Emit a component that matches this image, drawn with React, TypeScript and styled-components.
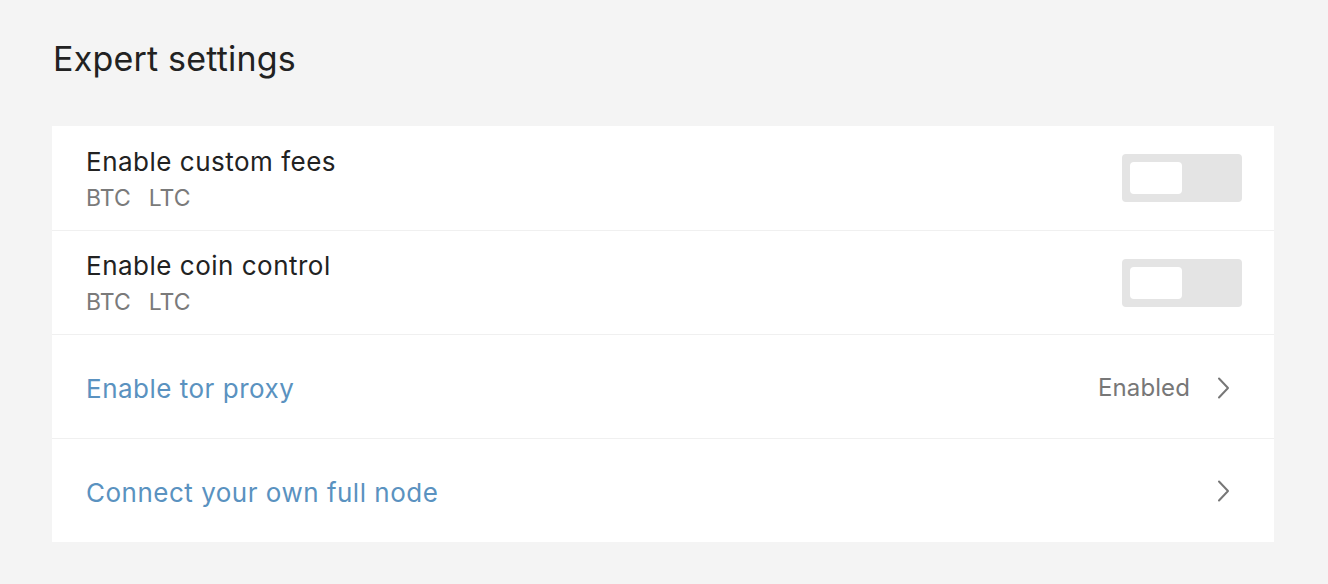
import { useState } from 'react';
import styled, { createGlobalStyle } from 'styled-components';

const GlobalStyle = createGlobalStyle`
  html, body {
    margin: 0;
    padding: 0;
    background: #f4f4f4;
    font-family: Inter, "Noto Sans", "Liberation Sans", sans-serif;
  }
`;

const Page = styled.div`
  padding: 36px 54px 0 52px;
`;

const Title = styled.h1`
  margin: 0 0 44px 1px;
  font-size: 34px;
  line-height: 46px;
  font-weight: 400;
  color: #222;
  letter-spacing: 0.2px;
`;

const Card = styled.div`
  background: #fff;
  display: flex;
  flex-direction: column;
`;

const Row = styled.div<{ $clickable?: boolean }>`
  height: 104px;
  box-sizing: border-box;
  padding: 0 32px 0 34px;
  display: flex;
  align-items: center;
  justify-content: space-between;
  cursor: ${(p) => (p.$clickable ? 'pointer' : 'default')};
  & + & {
    border-top: 1px solid #f0f0f0;
  }
`;

const Texts = styled.div`
  display: flex;
  flex-direction: column;
  gap: 7px;
  margin-top: 2px;
`;

const Label = styled.div<{ $link?: boolean }>`
  font-size: 26px;
  line-height: 30px;
  letter-spacing: 0.5px;
  color: ${(p) => (p.$link ? '#5a92c0' : '#222')};
  margin-top: ${(p) => (p.$link ? '4px' : '0')};
`;

const Coins = styled.div`
  display: flex;
  gap: 18px;
  font-size: 23px;
  line-height: 28px;
  color: #7a7a7a;
`;

const Toggle = styled.button<{ $on: boolean }>`
  width: 120px;
  height: 48px;
  border: none;
  border-radius: 4px;
  padding: 8px;
  background: ${(p) => (p.$on ? '#5a92c0' : '#e4e4e4')};
  display: flex;
  justify-content: ${(p) => (p.$on ? 'flex-end' : 'flex-start')};
  cursor: pointer;
`;

const Knob = styled.span`
  width: 52px;
  height: 32px;
  border-radius: 4px;
  background: #fff;
`;

const Right = styled.div`
  display: flex;
  align-items: center;
  gap: 26px;
  margin-top: 2px;
`;

const Value = styled.span`
  font-size: 24px;
  letter-spacing: 0.1px;
  color: #777;
`;

const Chevron = () => (
  <svg width="16" height="24" viewBox="0 0 16 24" fill="none">
    <path d="M3 2.5 L12 12 L3 21.5" stroke="#777" strokeWidth="2" strokeLinecap="round" strokeLinejoin="round" />
  </svg>
);

const ChevronBox = styled.span`
  display: flex;
  margin-right: 10px;
`;

const App = () => {
  const [fees, setFees] = useState(false);
  const [coins, setCoins] = useState(false);

  return (
    <>
      <GlobalStyle />
      <Page>
        <Title>Expert settings</Title>
        <Card>
          <Row>
            <Texts>
              <Label>Enable custom fees</Label>
              <Coins>
                <span>BTC</span>
                <span>LTC</span>
              </Coins>
            </Texts>
            <Toggle $on={fees} onClick={() => setFees(!fees)}>
              <Knob />
            </Toggle>
          </Row>
          <Row>
            <Texts>
              <Label>Enable coin control</Label>
              <Coins>
                <span>BTC</span>
                <span>LTC</span>
              </Coins>
            </Texts>
            <Toggle $on={coins} onClick={() => setCoins(!coins)}>
              <Knob />
            </Toggle>
          </Row>
          <Row $clickable>
            <Label $link>Enable tor proxy</Label>
            <Right>
              <Value>Enabled</Value>
              <ChevronBox>
                <Chevron />
              </ChevronBox>
            </Right>
          </Row>
          <Row $clickable>
            <Label $link>Connect your own full node</Label>
            <ChevronBox>
              <Chevron />
            </ChevronBox>
          </Row>
        </Card>
      </Page>
    </>
  );
};

export default App;
